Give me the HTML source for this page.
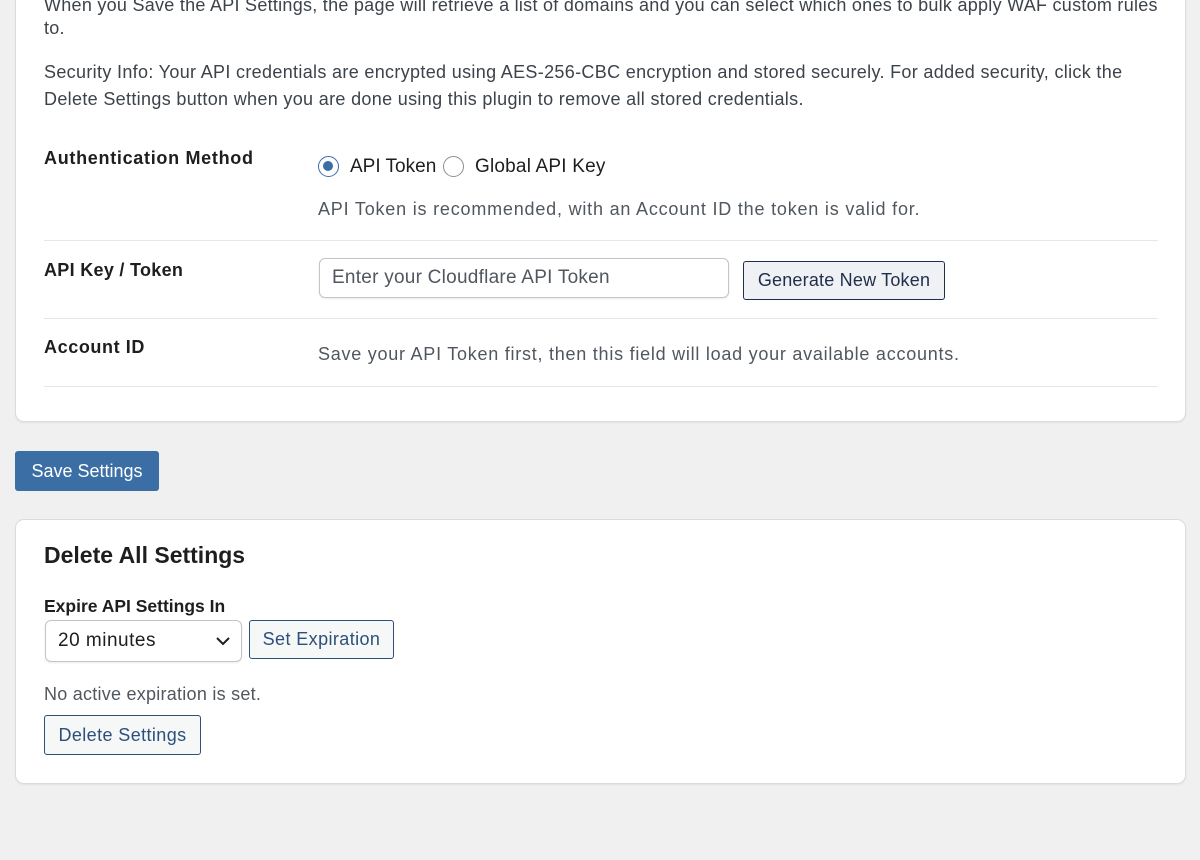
<!DOCTYPE html>
<html><head><style>
*{box-sizing:border-box;margin:0;padding:0}
body{width:1200px;height:860px;background:#f0f0f1;font-family:"Liberation Sans",sans-serif;color:#1e1e1e;position:relative;overflow:hidden;font-size:18px}
.card{position:absolute;left:15px;width:1171px;background:#fff;border:1px solid #dcdcde;border-radius:9px;box-shadow:0 1px 2px rgba(0,0,0,.06)}
.t{position:absolute;white-space:nowrap;line-height:20px}
.b{font-weight:bold}
.hr{position:absolute;left:44px;width:1114px;height:1px;background:#e6e6e8}
.btn{position:absolute;border:1px solid #2c4f7c;border-radius:3px;background:#f6f7f7;color:#2c4f7c;font-size:18px;letter-spacing:.4px;display:flex;align-items:center;justify-content:center}
.radio{position:absolute;width:21px;height:21px;border:1.5px solid #8c8f94;border-radius:50%;background:#fff}
</style></head><body>
<div class="card" style="top:-20px;height:442px"></div>
<div class="t" style="left:44px;top:-5px;color:#3c434a;letter-spacing:.27px">When you Save the API Settings, the page will retrieve a list of domains and you can select which ones to bulk apply WAF custom rules</div>
<div class="t" style="left:44px;top:18px;color:#3c434a;letter-spacing:.27px">to.</div>
<div class="t" style="left:44px;top:62px;color:#3c434a;letter-spacing:.33px">Security Info: Your API credentials are encrypted using AES-256-CBC encryption and stored securely. For added security, click the</div>
<div class="t" style="left:44px;top:89px;color:#3c434a;letter-spacing:.33px">Delete Settings button when you are done using this plugin to remove all stored credentials.</div>

<div class="t b" style="left:44px;top:148px;letter-spacing:.7px">Authentication Method</div>
<div class="radio" style="left:318px;top:156px;border-color:#3a6ea5"><div style="position:absolute;left:4px;top:4px;width:10px;height:10px;border-radius:50%;background:#3a6ea5"></div></div>
<div class="t" style="left:350px;top:157px;font-size:19px">API Token</div>
<div class="radio" style="left:443px;top:156px"></div>
<div class="t" style="left:475px;top:157px;font-size:19px;letter-spacing:.2px">Global API Key</div>
<div class="t" style="left:318px;top:199px;color:#50575e;letter-spacing:.8px">API Token is recommended, with an Account ID the token is valid for.</div>
<div class="hr" style="top:240px"></div>

<div class="t b" style="left:44px;top:260px;letter-spacing:.3px">API Key / Token</div>
<div style="position:absolute;left:319px;top:258px;width:410px;height:40px;border:1px solid #c3c4c7;border-radius:6px;box-shadow:0 1px 2px rgba(0,0,0,.08)"></div>
<div class="t" style="left:332px;top:268px;color:#50575e;font-size:19px;letter-spacing:.25px">Enter your Cloudflare API Token</div>
<div class="btn" style="left:743px;top:261px;width:202px;height:39px;color:#1d2f4a;border-color:#1d2f4a;background:#f0f1f4;letter-spacing:.2px">Generate New Token</div>
<div class="hr" style="top:318px"></div>

<div class="t b" style="left:44px;top:337px;letter-spacing:.6px">Account ID</div>
<div class="t" style="left:318px;top:344px;color:#50575e;letter-spacing:.75px">Save your API Token first, then this field will load your available accounts.</div>
<div class="hr" style="top:386px"></div>

<div style="position:absolute;left:15px;top:451px;width:144px;height:40px;background:#3a6ea5;border-radius:3px;color:#fff;font-size:18px;display:flex;align-items:center;justify-content:center">Save Settings</div>

<div class="card" style="top:519px;height:265px"></div>
<div class="t b" style="left:44px;top:543px;font-size:23px;line-height:24px">Delete All Settings</div>
<div class="t b" style="left:44px;top:596px;font-size:17.5px">Expire API Settings In</div>
<div style="position:absolute;left:45px;top:620px;width:197px;height:42px;border:1px solid #c3c4c7;border-radius:6px;box-shadow:0 1px 2px rgba(0,0,0,.08)"></div>
<div class="t" style="left:58px;top:631px;font-size:19px;letter-spacing:.5px">20 minutes</div>
<svg style="position:absolute;left:215px;top:636px" width="16" height="10" viewBox="0 0 16 10"><path d="M2 2l6 6 6-6" fill="none" stroke="#1e1e1e" stroke-width="2"/></svg>
<div class="btn" style="left:249px;top:620px;width:145px;height:39px">Set Expiration</div>
<div class="t" style="left:44px;top:684px;color:#50575e;letter-spacing:.25px">No active expiration is set.</div>
<div class="btn" style="left:44px;top:715px;width:157px;height:40px">Delete Settings</div>
</body></html>
